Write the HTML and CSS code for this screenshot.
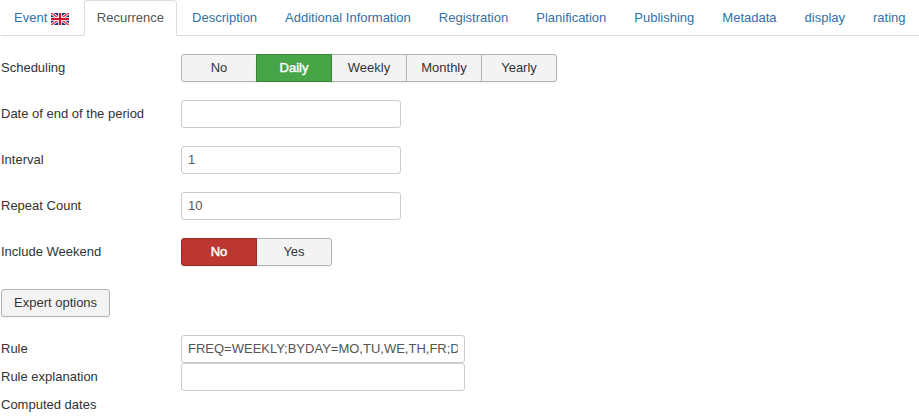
FILE: index.html
```html
<!DOCTYPE html>
<html lang="en">
<head>
<meta charset="utf-8">
<title>Event recurrence</title>
<link rel="stylesheet" href="styles.css">
</head>
<body>
<nav class="tabs">
  <a class="tab">Event <svg class="flag" width="18" height="12" viewBox="0 0 18 12"><path fill="#123a80" d="M0 0h18v12H0z"/><path stroke="#fff" stroke-width="2.8" d="M0 0l18 12M18 0L0 12"/><path stroke="#dc2840" stroke-width="1.3" d="M0 0l18 12M18 0L0 12"/><path stroke="#fff" stroke-width="3.6" d="M9 0v12M0 6h18"/><path stroke="#d80f2a" stroke-width="2" d="M9 0v12M0 6h18"/></svg></a>
  <a class="tab active">Recurrence</a>
  <a class="tab">Description</a>
  <a class="tab">Additional Information</a>
  <a class="tab">Registration</a>
  <a class="tab">Planification</a>
  <a class="tab">Publishing</a>
  <a class="tab">Metadata</a>
  <a class="tab">display</a>
  <a class="tab">rating</a>
</nav>
<form class="form">
  <div class="row">
    <span class="label">Scheduling</span>
    <div class="group">
      <button type="button" class="btn">No</button><button type="button" class="btn green">Daily</button><button type="button" class="btn">Weekly</button><button type="button" class="btn">Monthly</button><button type="button" class="btn">Yearly</button>
    </div>
  </div>
  <div class="row"><label class="label" for="end">Date of end of the period</label><input id="end" class="input" type="text"></div>
  <div class="row"><label class="label" for="interval">Interval</label><input id="interval" class="input" type="text" value="1"></div>
  <div class="row"><label class="label" for="count">Repeat Count</label><input id="count" class="input" type="text" value="10"></div>
  <div class="row">
    <span class="label">Include Weekend</span>
    <div class="group">
      <button type="button" class="btn red">No</button><button type="button" class="btn">Yes</button>
    </div>
  </div>
  <button type="button" class="btn expert">Expert options</button>
  <div class="rules">
    <div class="row"><label class="label" for="rule">Rule</label><input id="rule" class="input wide" type="text" value="FREQ=WEEKLY;BYDAY=MO,TU,WE,TH,FR;DTSTART=20190101"></div>
    <div class="row"><label class="label" for="explain">Rule explanation</label><input id="explain" class="input wide" type="text"></div>
    <div class="row"><span class="label">Computed dates</span></div>
  </div>
</form>
</body>
</html>
```
FILE: styles.css
```css
* { box-sizing: border-box; }

body {
  margin: 0;
  height: 417px;
  overflow: hidden;
  background: #fff;
  color: #333;
  font: 13px/18px "Liberation Sans", Arial, sans-serif;
}

.tabs {
  display: flex;
  height: 36px;
  margin-left: 1px;
  border-bottom: 1px solid #ddd;
}

.tab {
  flex: none;
  height: 36px;
  margin-right: 2px;
  padding: 8px 12px;
  border: 1px solid transparent;
  border-radius: 4px 4px 0 0;
  color: #3071a9;
  white-space: nowrap;
}

.tab.active {
  border-color: #ddd #ddd #fff;
  background: #fff;
  color: #555;
}

.flag { vertical-align: -3px; }

.form { padding: 18px 0 0 1px; }

.row {
  display: flex;
  height: 28px;
  margin-bottom: 18px;
}

.label {
  flex: none;
  width: 180px;
  padding-top: 5px;
}

.input {
  width: 220px;
  height: 28px;
  margin: 0;
  padding: 3px 6px 5px;
  border: 1px solid #ccc;
  border-radius: 3px;
  background: #fff;
  color: #555;
  font: inherit;
}

.wide { width: 284px; }

.group { display: flex; }

.btn {
  height: 28px;
  margin: 0;
  padding: 0 12px;
  border: 1px solid #b3b3b3;
  border-radius: 3px;
  background: #f3f3f3;
  box-shadow: 0 1px 2px rgba(0, 0, 0, .05);
  color: #333;
  font: inherit;
}

.group .btn {
  width: 76px;
  margin-left: -1px;
  border-radius: 0;
}

.group .btn:first-child {
  margin-left: 0;
  border-radius: 3px 0 0 3px;
}

.group .btn:last-child { border-radius: 0 3px 3px 0; }

.group .green, .group .red {
  position: relative;
  color: #fff;
  text-shadow: 0 -1px 0 rgba(0, 0, 0, .25);
  -webkit-text-stroke: .5px #fff;
}

.group .green {
  border-color: #398439;
  background: #46a546;
}

.group .red {
  border-color: #942a25;
  background: #bd362f;
}

.expert {
  display: block;
  margin-top: 23px;
}

.rules { margin-top: 18px; }

.rules .row { margin-bottom: 0; }
```
